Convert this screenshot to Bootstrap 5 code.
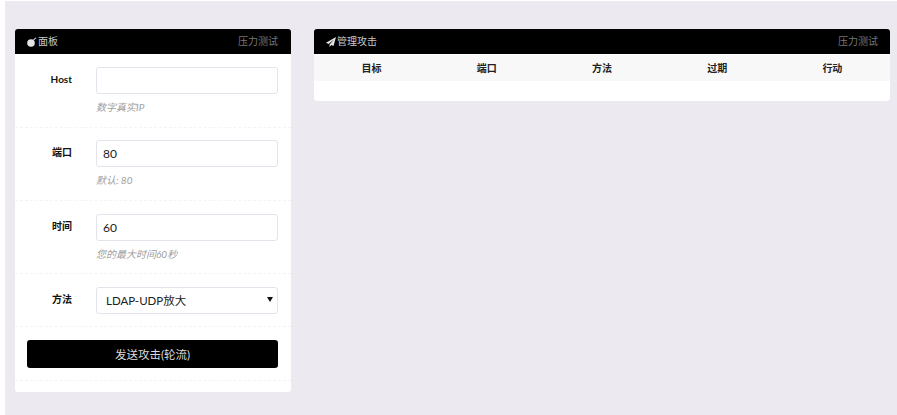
<!DOCTYPE html>
<html lang="zh">
<head>
<meta charset="utf-8">
<title>面板</title>
<link href="https://cdn.jsdelivr.net/npm/bootstrap@5.3.0/dist/css/bootstrap.min.css" rel="stylesheet">
<style>
html,body{height:100%}
body{background:#fff;font-family:"Lato","Noto Sans CJK SC",sans-serif;font-size:11px;color:#1f1f1f;overflow:hidden}
.stage{margin:1px 0 0 5px;height:414px;background:#ece9f1;padding:28px 7px 0 10px;gap:23px;align-items:flex-start}
.panel-l{width:276px;flex:none;background:#fff;border-radius:3px;overflow:hidden}
.panel-r{flex:1;background:#fff;border-radius:3px;overflow:hidden}
.head{height:25px;background:#000;color:#c8c8c8;padding:0 13px 0 12px;font-size:10px}
.panel-r .head{padding-right:12px}
.head .opts{color:#777}
.icon-gap{gap:1px}
.frow{padding:13px 13px 0 12px;border-bottom:1px dashed #f4f4f6}
.r1{height:74px}
.r1b{height:73px;padding-top:12px}
.r1c{height:73px}
.r2{height:53px}
.r3{height:54px}
.lbl{width:45px;flex:none;text-align:right;font-weight:700;font-size:10px;line-height:24px;color:#111;margin-right:24px}
.fld{flex:1;min-width:0}
.inp{height:27px;padding:0 6px;font-size:12px;border:1px solid #e4e2ea;border-radius:3px;color:#222;box-shadow:none}
.sel{height:27px;padding:0 6px 0 9px;font-size:11.5px;border:1px solid #e4e2ea;border-radius:3px;color:#222;background-color:#fff;background-image:none}
.sel-wrap{position:relative}
.arrow{position:absolute;right:5px;top:10px;width:0;height:0;border-left:3px solid transparent;border-right:3px solid transparent;border-top:5px solid #111}
.hint{margin-top:7px;font-size:10px;font-style:italic;color:#9e9e9e;line-height:13px}
.send{height:28px;background:#000;color:#ddd;font-size:11.5px;border:0;border-radius:3px;padding:1px 0 0;width:100%}
.tail{height:11px}
.tbl{table-layout:fixed;margin:0;margin-top:1px;font-size:10px}
.tbl th{background:#f8f8f8;height:26px;padding:1px 0 0;text-align:center;vertical-align:middle;border:0;font-weight:700;color:#222;box-shadow:none}
.blank{height:20px}
svg{display:block;flex:none}
</style>
</head>
<body>
<div class="stage d-flex">
  <div class="panel-l">
    <div class="head d-flex justify-content-between align-items-center">
      <span class="d-flex align-items-center icon-gap"><svg width="10" height="10" viewBox="0 0 10 10"><circle cx="4" cy="6" r="3.8" fill="#e4e4e4"/><path d="M6.5 3.2 8 1.6" stroke="#ccc" stroke-width="1.2" fill="none"/><circle cx="8.6" cy="1.2" r=".8" fill="#aaa"/></svg>面板</span>
      <span class="opts">压力测试</span>
    </div>
    <div class="frow r1 d-flex">
      <div class="lbl">Host</div>
      <div class="fld"><input class="form-control inp" type="text"><div class="hint">数字真实IP</div></div>
    </div>
    <div class="frow r1b d-flex">
      <div class="lbl">端口</div>
      <div class="fld"><input class="form-control inp" type="text" value="80"><div class="hint">默认: 80</div></div>
    </div>
    <div class="frow r1c d-flex">
      <div class="lbl">时间</div>
      <div class="fld"><input class="form-control inp" type="text" value="60"><div class="hint">您的最大时间60秒</div></div>
    </div>
    <div class="frow r2 d-flex">
      <div class="lbl">方法</div>
      <div class="fld sel-wrap"><select class="form-select sel"><option>LDAP-UDP放大</option></select><span class="arrow"></span></div>
    </div>
    <div class="frow r3"><button class="btn send" type="button">发送攻击(轮流)</button></div>
    <div class="tail"></div>
  </div>
  <div class="panel-r">
    <div class="head d-flex justify-content-between align-items-center">
      <span class="d-flex align-items-center icon-gap"><svg width="10" height="10" viewBox="0 0 10 10"><path d="M10 0 0 5.8l2.6 1.1L8 2.4 3.6 7.5V10l1.7-1.9 2.2 1z" fill="#e4e4e4"/></svg>管理攻击</span>
      <span class="opts">压力测试</span>
    </div>
    <table class="table tbl">
      <thead><tr><th>目标</th><th>端口</th><th>方法</th><th>过期</th><th>行动</th></tr></thead>
    </table>
    <div class="blank"></div>
  </div>
</div>
<script src="https://cdn.jsdelivr.net/npm/bootstrap@5.3.0/dist/js/bootstrap.bundle.min.js"></script>
</body>
</html>
